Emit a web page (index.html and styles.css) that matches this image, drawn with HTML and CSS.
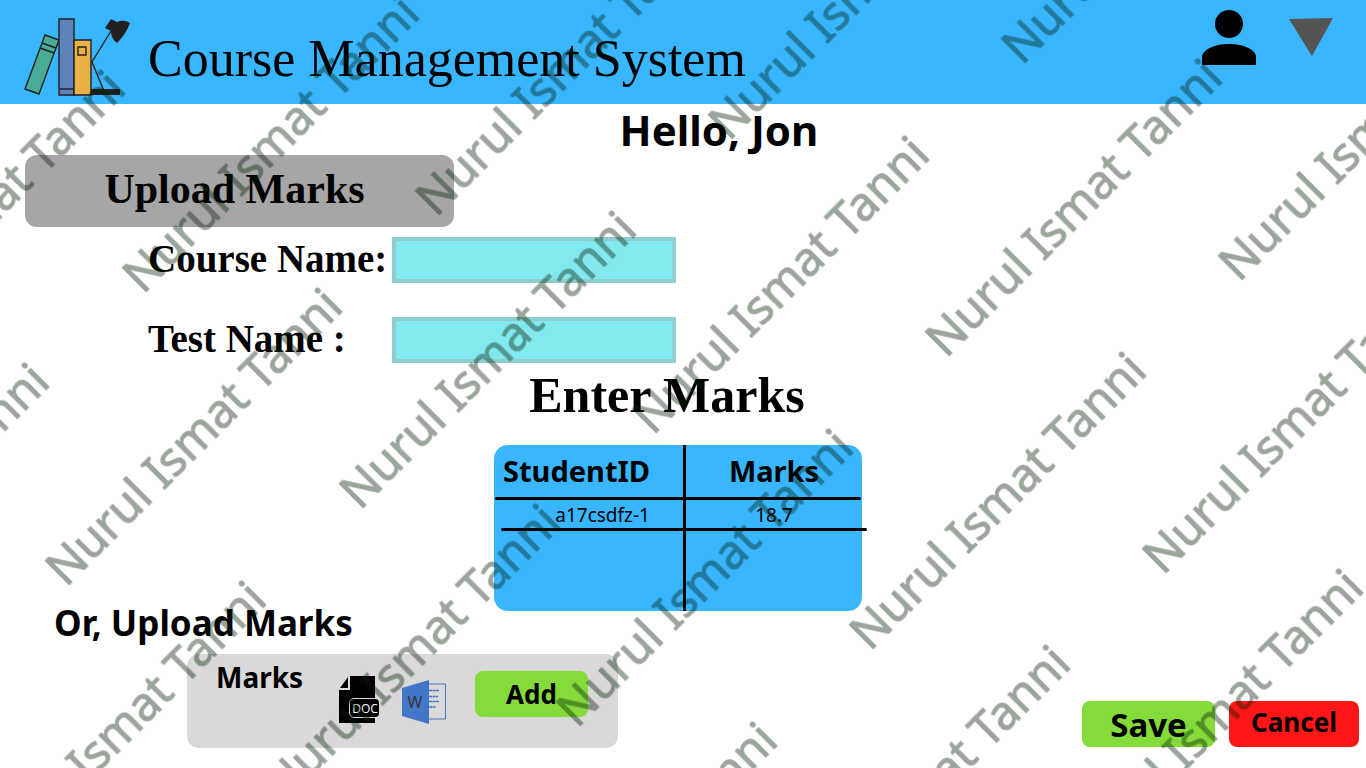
FILE: index.html
```html
<!DOCTYPE html>
<html lang="en">
<head>
<meta charset="utf-8">
<title>Course Management System</title>
<link rel="stylesheet" href="styles.css">
</head>
<body>
<header class="topbar">
  <svg class="logo" width="106" height="80" viewBox="0 0 106 80" aria-hidden="true">
    <g stroke="#221f1f" stroke-width="1.4">
      <path d="M21 17L35 22L15 76L1 71Z" fill="#48ab95"/>
      <path d="M18 25L32 30M16 30L30 35" fill="none"/>
      <path d="M35 1H50V77H35Z" fill="#5d83bd"/>
      <path d="M35 71H50" fill="none"/>
      <path d="M50 22H67V77H50Z" fill="#eab146"/>
      <path d="M54 29H62V37H54Z" fill="none"/>
      <path d="M87 13L68 44L80 73" fill="none"/>
    </g>
    <path d="M67 71H96V77H67Z" fill="#221f1f"/>
    <path d="M87 1L93 4Q100 1 106 5Q102 16 93 25Q87 21 87 13L81 10Z" fill="#221f1f"/>
  </svg>
  <h1 class="brand">Course Management System</h1>
  <svg class="user" width="54" height="55" viewBox="0 0 54 55" role="img" aria-label="User">
    <circle cx="27" cy="14" r="14"/>
    <path d="M0 55V47C0 40 12 34 27 34S54 40 54 47V55Z"/>
  </svg>
  <button class="menu" type="button" aria-label="Open menu">
    <svg width="44" height="38" viewBox="0 0 44 38"><path d="M0 1L44 0L23 38Z" fill="#545454"/></svg>
  </button>
</header>
<main>
  <p class="greeting">Hello, Jon</p>
  <h2 class="banner">Upload Marks</h2>
  <form class="details">
    <label for="course">Course Name:</label><input id="course" type="text">
    <label for="test">Test Name :</label><input id="test" type="text">
  </form>
  <h2 class="enter">Enter Marks</h2>
  <table class="marks">
    <thead><tr><th>StudentID</th><th>Marks</th></tr></thead>
    <tbody>
      <tr class="entry"><td>a17csdfz-1</td><td>18.7</td></tr>
      <tr class="blank"><td></td><td></td></tr>
    </tbody>
  </table>
  <h3 class="or">Or, Upload Marks</h3>
  <div class="bottom">
    <section class="upload">
      <h4>Marks</h4>
      <svg class="doc" width="41" height="47" viewBox="0 0 41 47" role="img" aria-label="DOC file">
        <path d="M11 0H36V47H0V14H11Z"/>
        <path d="M9 1V12H1Z"/>
        <path d="M0 13.500H10.500V0" fill="none" stroke="#d9d9d9"/>
        <rect x="11" y="23" width="29" height="18" rx="4"/>
        <path d="M36 22.500H15Q10.500 23 10.500 27V37Q11 41.500 15 41.500H36" fill="none" stroke="#d9d9d9"/>
        <text x="26" y="37" class="doc-text">DOC</text>
      </svg>
      <svg class="word" width="44" height="44" viewBox="0 0 44 44" role="img" aria-label="Word file">
        <path d="M26 4H43.500V39H26" fill="none" stroke="#4276c6"/>
        <path d="M27 10.500H37M27 16.500H36M27 21.500H37M27 27H34" fill="none" stroke="#4276c6" stroke-width="1.500" stroke-dasharray="3 .5"/>
        <path d="M0 8L27 0V44L0 36Z" fill="#4276c6"/>
        <text x="13" y="28" class="word-text">W</text>
      </svg>
      <button class="btn add" type="button">Add</button>
    </section>
    <div class="actions">
      <button class="btn save" type="button">Save</button>
      <button class="btn cancel" type="button">Cancel</button>
    </div>
  </div>
</main>
<svg class="watermark" aria-hidden="true">
  <g>
    <text transform="translate(-151 370) rotate(-45)">Nurul Ismat Tanni</text>
    <text transform="translate(143 295) rotate(-45)">Nurul Ismat Tanni</text>
    <text transform="translate(436 218) rotate(-45)">Nurul Ismat Tanni</text>
    <text transform="translate(729 142) rotate(-45)">Nurul Ismat Tanni</text>
    <text transform="translate(1022 66) rotate(-45)">Nurul Ismat Tanni</text>
    <text transform="translate(219 2) rotate(-45)">Nurul Ismat Tanni</text>
    <text transform="translate(-227 663) rotate(-45)">Nurul Ismat Tanni</text>
    <text transform="translate(66 588) rotate(-45)">Nurul Ismat Tanni</text>
    <text transform="translate(360 511) rotate(-45)">Nurul Ismat Tanni</text>
    <text transform="translate(653 436) rotate(-45)">Nurul Ismat Tanni</text>
    <text transform="translate(946 359) rotate(-45)">Nurul Ismat Tanni</text>
    <text transform="translate(1239 283) rotate(-45)">Nurul Ismat Tanni</text>
    <text transform="translate(-10 881) rotate(-45)">Nurul Ismat Tanni</text>
    <text transform="translate(284 804) rotate(-45)">Nurul Ismat Tanni</text>
    <text transform="translate(577 729) rotate(-45)">Nurul Ismat Tanni</text>
    <text transform="translate(870 652) rotate(-45)">Nurul Ismat Tanni</text>
    <text transform="translate(1163 576) rotate(-45)">Nurul Ismat Tanni</text>
    <text transform="translate(501 1022) rotate(-45)">Nurul Ismat Tanni</text>
    <text transform="translate(794 945) rotate(-45)">Nurul Ismat Tanni</text>
    <text transform="translate(1087 869) rotate(-45)">Nurul Ismat Tanni</text>
  </g>
</svg>
</body>
</html>
```
FILE: styles.css
```css
* { box-sizing: border-box; }
body {
  margin: 0;
  position: relative;
  min-height: 100vh;
  overflow: hidden;
  background: #fff;
  color: #000;
  font-family: "Noto Sans", "Open Sans", sans-serif;
}
h1, h2, h3, h4, p { margin: 0; }
.topbar {
  display: flex;
  align-items: flex-start;
  height: 104px;
  padding: 0 33px 0 24px;
  background: #38b6ff;
}
.logo { margin-top: 18px; }
.brand {
  margin: 27px auto 0 18px;
  font: 400 52px/64px "Liberation Serif", serif;
  white-space: nowrap;
}
.user { margin-top: 10px; }
.menu {
  margin: 18px 0 0 33px;
  padding: 0;
  border: 0;
  background: none;
}
.menu svg { display: block; }
.greeting {
  padding-left: 72px;
  text-align: center;
  font-size: 42px;
  font-weight: 700;
  line-height: 51px;
}
.banner {
  width: 429px;
  margin-left: 25px;
  padding: 0 10px 4px 0;
  border-radius: 12px;
  background: #a6a6a6;
  text-align: center;
  font: 700 42px/68px "Liberation Serif", serif;
}
.details {
  display: grid;
  grid-template-columns: 244px 284px;
  row-gap: 34px;
  padding: 10px 0 0 148px;
  font: 700 39px/44px "Liberation Serif", serif;
}
.details label { white-space: nowrap; }
.details input {
  width: 100%;
  height: 46px;
  padding: 0 8px;
  border: 4px solid #8fced0;
  background: #82eaee;
  font: 20px "Noto Sans", sans-serif;
}
.enter {
  padding: 0 32px 18px 0;
  text-align: center;
  font: 700 50px/64px "Liberation Serif", serif;
}
.marks {
  width: 368px;
  margin: 0 0 0 494px;
  border-spacing: 0;
  border-radius: 14px;
  background: #38b6ff;
  table-layout: fixed;
}
.marks th, .marks td { padding: 0; text-align: center; }
.marks th { height: 52px; font-size: 29px; line-height: 50px; }
.marks .entry td { height: 32px; padding-top: 4px; font-size: 19px; line-height: 28px; }
.marks .blank td { height: 82px; }
.marks th:first-child, .marks td:first-child {
  position: relative;
  width: 192px;
  padding-right: 33px;
  border-right: 3px solid #000;
  text-align: right;
}
.marks th:first-child::after, .marks .entry td:first-child::after {
  content: "";
  position: absolute;
  left: 1px;
  bottom: -3px;
  width: 366px;
  height: 3px;
  border-radius: 2px;
  background: #000;
}
.marks .entry td:first-child::after { left: 7px; bottom: -2px; }
.or {
  padding-left: 54px;
  font-size: 35px;
  line-height: 24px;
}
.bottom {
  display: flex;
  justify-content: space-between;
  align-items: flex-end;
  padding: 19px 7px 0 187px;
}
.upload {
  display: flex;
  align-items: flex-start;
  width: 431px;
  height: 94px;
  padding-left: 29px;
  border-radius: 12px;
  background: #d9d9d9;
}
.upload h4 { width: 123px; padding-top: 4px; font-size: 28px; line-height: 38px; }
.doc { margin-top: 22px; }
.word { margin: 26px 29px 0 22px; }
.doc-text { fill: #fff; font: 12px "Open Sans", sans-serif; text-anchor: middle; }
.word-text { fill: #333; font: 16px "Open Sans", sans-serif; text-anchor: middle; }
.actions { display: flex; gap: 14px; padding-bottom: 1px; }
.btn {
  height: 46px;
  padding: 0;
  border: 0;
  border-radius: 8px;
  background: #84db3a;
  color: #000;
  font: 700 26px/40px "Noto Sans", "Open Sans", sans-serif;
}
.add { width: 113px; margin-top: 17px; }
.save { width: 133px; padding-top: 2px; font-size: 33px; }
.cancel { width: 130px; padding-bottom: 4px; background: #ff1616; }
.watermark {
  position: absolute;
  inset: 0;
  width: 100%;
  height: 100%;
  pointer-events: none;
}
.watermark g { opacity: .4; }
.watermark text {
  fill: #052005;
  stroke: #052005;
  stroke-width: 1px;
  font: 47px "Noto Sans", sans-serif;
}
```
